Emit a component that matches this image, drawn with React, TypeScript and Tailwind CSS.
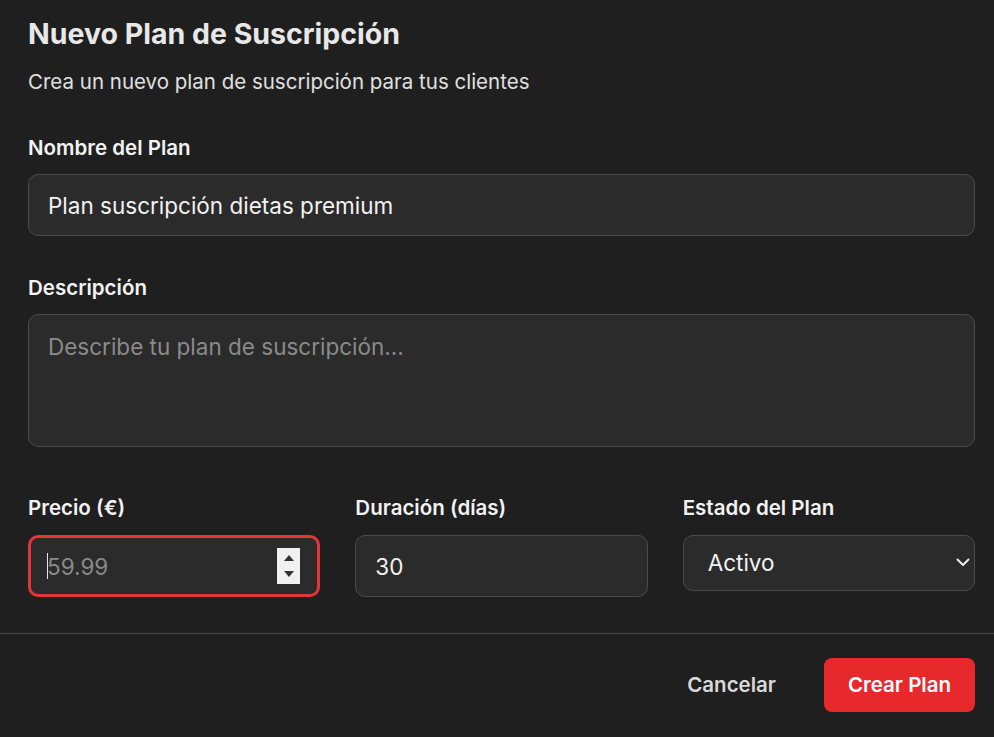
const font = { fontFamily: 'Inter, "Noto Sans", sans-serif' }

function Label({ children }: { children: React.ReactNode }) {
  return <label className="block text-[20.5px] font-semibold leading-[28px] text-[#f2f2f2]">{children}</label>
}

// base look of all fields; padding and border set per field
const field =
  'w-full rounded-[10px] bg-[#2b2b2b] text-[22.5px] text-[#f2f2f2] outline-none placeholder:text-[#8a8a8a]'
const plain = 'border border-[#4b4b4b]'

export default function App() {
  return (
    <div className="min-h-[737px] w-[994px] bg-[#1f1f1f]" style={font}>
      <div className="pl-[28px] pr-[19px] pt-[16px]">
        <h1 className="text-[28.5px] font-bold leading-[36px] text-[#e8e8e8]">Nuevo Plan de Suscripción</h1>
        <p className="mt-4 text-[20.5px] leading-[28px] text-[#e0e0e0]">
          Crea un nuevo plan de suscripción para tus clientes
        </p>

        {/* Nombre */}
        <div className="mt-[38px]">
          <Label>Nombre del Plan</Label>
          <input
            className={`${field} ${plain} mt-[12px] h-[62px] px-[19px]`}
            defaultValue="Plan suscripción dietas premium"
          />
        </div>

        {/* Descripción */}
        <div className="mt-[38px]">
          <Label>Descripción</Label>
          <textarea
            className={`${field} ${plain} mt-[12px] block h-[133px] resize-none px-[19px] py-[16px] leading-[32px]`}
            placeholder="Describe tu plan de suscripción..."
          />
        </div>

        {/* Precio / Duración / Estado */}
        <div className="mt-[47px] grid grid-cols-3 gap-x-[35px]">
          <div>
            <Label>Precio (€)</Label>
            <div className="relative mt-[13px]">
              <input
                type="number"
                placeholder="59.99"
                className={`${field} h-[62px] border-[3px] border-[#e5343a] pl-[16px] pr-[50px] [appearance:textfield] [&::-webkit-inner-spin-button]:appearance-none [&::-webkit-outer-spin-button]:appearance-none`}
              />
              {/* caret */}
              <div className="absolute left-[19px] top-[18px] h-[26px] w-px bg-[#e6e6e6]" />
              {/* spinner */}
              <div className="absolute right-[20px] top-[13px] flex h-[36px] w-[23px] flex-col items-center justify-center gap-[10px] bg-[#f0f0f0]">
                <div className="h-0 w-0 border-x-[5px] border-b-[6px] border-x-transparent border-b-[#333]" />
                <div className="h-0 w-0 border-x-[5px] border-t-[6px] border-x-transparent border-t-[#333]" />
              </div>
            </div>
          </div>
          <div>
            <Label>Duración (días)</Label>
            <input type="text" defaultValue="30" className={`${field} ${plain} mt-[13px] h-[62px] px-[19px]`} />
          </div>
          <div>
            <Label>Estado del Plan</Label>
            <div className="relative mt-[13px]">
              <select className={`${field} ${plain} h-[56px] appearance-none px-[24px]`} defaultValue="activo">
                <option value="activo">Activo</option>
                <option value="inactivo">Inactivo</option>
              </select>
              <svg
                className="pointer-events-none absolute right-[5px] top-[23px]"
                width="14"
                height="9"
                viewBox="0 0 14 9"
                fill="none"
              >
                <polyline points="1.5,1.5 7,7 12.5,1.5" stroke="#ececec" strokeWidth="2" strokeLinecap="round" strokeLinejoin="round" />
              </svg>
            </div>
          </div>
        </div>
      </div>

      <div className="mt-[36px] border-t border-[#4a4a4a]" />

      <div className="flex items-center justify-end gap-[48px] px-[19px] pt-[24px]">
        <button className="text-[20.5px] font-semibold text-[#d9d9d9]">Cancelar</button>
        <button className="h-[54px] w-[151px] rounded-[8px] bg-[#e8292c] text-[20.5px] font-semibold text-white">
          Crear Plan
        </button>
      </div>
    </div>
  )
}
